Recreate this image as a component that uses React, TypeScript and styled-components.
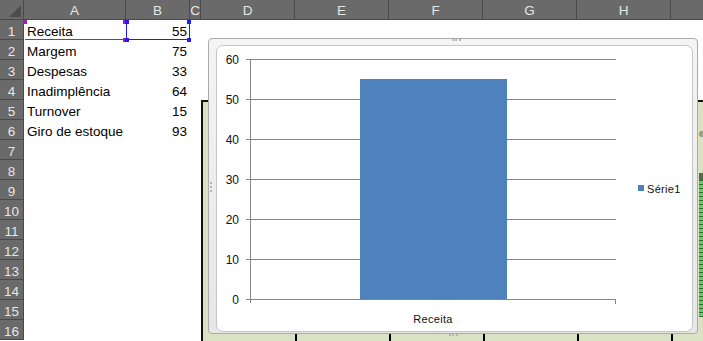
import React from "react";
import styled, { createGlobalStyle } from "styled-components";

const Global = createGlobalStyle`
  html, body { margin: 0; padding: 0; background: #ffffff; overflow: hidden; }
  body { font-family: "Liberation Sans", Arial, sans-serif; }
`;

const Page = styled.div`
  position: relative;
  width: 703px;
  height: 341px;
  overflow: hidden;
  background: #ffffff;
`;

const Sheet = styled.div`
  display: grid;
  grid-template-columns: 24px 102px 64px 11px 94px 94px 94px 94px 94px 1fr;
  grid-auto-rows: 20px;
  font-size: 13.5px;
`;

const HeaderCell = styled.div<{ $last?: boolean }>`
  box-sizing: border-box;
  background: #6a6a6a;
  color: #e6e6e6;
  border-right: ${(p) => (p.$last ? "none" : "1px solid #494949")};
  border-bottom: 1px solid #494949;
  text-align: center;
  padding-top: 1px;
  line-height: 19px;
`;

const Corner = styled(HeaderCell)`
  position: relative;
  svg { position: absolute; left: 0; top: 0; }
`;

const RowHead = styled.div`
  box-sizing: border-box;
  background: #6a6a6a;
  color: #e6e6e6;
  border-right: 1px solid #494949;
  border-bottom: 1px solid #494949;
  text-align: center;
  padding-top: 3px;
  line-height: 17px;
`;

const Cell = styled.div<{ $align?: "left" | "right" }>`
  position: relative;
  box-sizing: border-box;
  color: #000000;
  text-align: ${(p) => p.$align ?? "left"};
  padding: 3px ${(p) => (p.$align === "right" ? "3px" : "0")} 0 ${(p) => (p.$align === "right" ? "0" : "3px")};
  line-height: 17px;
  white-space: nowrap;
`;

const SelLine = styled.div<{ $color: string; $side: "left" | "right" | "bottom" }>`
  position: absolute;
  background: ${(p) => p.$color};
  ${(p) =>
    p.$side === "bottom"
      ? "left: 1px; right: 1px; bottom: 0; height: 1px;"
      : `${p.$side}: 0; top: 1px; bottom: 0; width: 1px;`}
`;

const Handle = styled.div<{ $color: string; $x: "l" | "r"; $y: "t" | "b" }>`
  position: absolute;
  width: 4px;
  height: 4px;
  background: ${(p) => p.$color};
  ${(p) => (p.$x === "l" ? "left: -1px;" : "right: -1px;")}
  ${(p) => (p.$y === "t" ? "top: 0;" : "bottom: -2px;")}
`;

/* chart behind the active one */
const BackChart = styled.div`
  position: absolute;
  left: 201px;
  top: 100px;
  width: 510px;
  height: 250px;
  box-sizing: border-box;
  border-top: 2px solid #111;
  border-left: 2px solid #111;
  background: #dbe2c3;
`;

const Tick = styled.div<{ $x: number }>`
  position: absolute;
  bottom: 9px;
  width: 2px;
  height: 8px;
  background: #000;
  left: ${(p) => p.$x}px;
`;

const GreenBar = styled.div`
  position: absolute;
  left: 496px;
  top: 71px;
  width: 8px;
  height: 137px;
  background: repeating-linear-gradient(to bottom, #2f6a2f 0 1px, #5fcf5f 1px 4px);
  border-top: 7px solid #4f6a4f;
`;

const Marker = styled.div`
  position: absolute;
  left: 496px;
  top: 29px;
  width: 4px;
  height: 6px;
  border-radius: 50%;
  border-left: 2px solid #d88a2a;
  background: #6fb5c8;
`;

const Frame = styled.div`
  position: absolute;
  left: 208px;
  top: 38px;
  width: 490px;
  height: 296px;
  box-sizing: border-box;
  border: 1px solid #ababab;
  border-radius: 4px;
  background: linear-gradient(#f4f4f4, #e6e6e6);
  padding: 6px 4px 1px 7px;
  display: flex;
`;

const Grip = styled.div<{ $pos: "top" | "left" | "bottom" }>`
  position: absolute;
  ${(p) =>
    p.$pos === "top"
      ? "top: 0px; left: 243px; width: 9px; height: 2px; border-top: 2px dotted #b5b5b5;"
      : p.$pos === "bottom"
      ? "bottom: -5px; left: 240px; width: 9px; height: 2px; border-top: 2px dotted #b5b5b5;"
      : "left: 1px; top: 143px; width: 2px; height: 10px; border-left: 2px dotted #b5b5b5;"}
`;

const Plot = styled.div`
  flex: 1;
  box-sizing: border-box;
  background: #ffffff;
  border: 1px solid #c6c6c6;
  border-radius: 7px;
  overflow: hidden;
  svg { display: block; }
`;

const rows: [string, number][] = [
  ["Receita", 55],
  ["Margem", 75],
  ["Despesas", 33],
  ["Inadimplência", 64],
  ["Turnover", 15],
  ["Giro de estoque", 93],
];

const cols = ["A", "B", "C", "D", "E", "F", "G", "H", ""];

const PURPLE = "#9b1fc0";
const BLUE = "#1c1cff";

function Chart() {
  const W = 477;
  const H = 287;
  const x0 = 33;
  const x1 = 399;
  const yTop = 13;
  const yBot = 253;
  const ticks = [60, 50, 40, 30, 20, 10, 0];
  const yOf = (v: number) => yBot - ((yBot - yTop) * v) / 60;
  const font = "'Liberation Sans', Arial, sans-serif";
  return (
    <svg width={W} height={H} viewBox={`0 0 ${W} ${H}`}>
      {ticks.map((t) => (
        <g key={t}>
          <line x1={x0 - 4} x2={x1} y1={yOf(t) + 0.5} y2={yOf(t) + 0.5} stroke="#868686" strokeWidth={1} />
          <text x={22} y={yOf(t) + 4.5} fontSize={12} textAnchor="end" fill="#111" fontFamily={font}>
            {t}
          </text>
        </g>
      ))}
      <line x1={x0 + 0.5} x2={x0 + 0.5} y1={yTop} y2={yBot + 4} stroke="#868686" />
      <line x1={x1 - 0.5} x2={x1 - 0.5} y1={yBot} y2={yBot + 5} stroke="#868686" />
      <rect x={143} y={yOf(55)} width={147} height={yBot - yOf(55)} fill="#4f81bd" />
      <text x={216} y={277} fontSize={11} textAnchor="middle" fill="#111" fontFamily={font} letterSpacing={0.3}>
        Receita
      </text>
      <rect x={421} y={139} width={6} height={6} fill="#4f81bd" />
      <text x={430} y={147} fontSize={11} fill="#111" fontFamily={font} letterSpacing={0.3}>
        Série1
      </text>
    </svg>
  );
}

export default function App() {
  return (
    <Page>
      <Global />
      <Sheet>
        <Corner>
          <svg width="24" height="20" viewBox="0 0 24 20">
            <polygon points="21,5 21,17 9,17" fill="#4d4d4d" />
          </svg>
        </Corner>
        {cols.map((c, i) => (
          <HeaderCell key={i} $last={i === cols.length - 1}>
            {c}
          </HeaderCell>
        ))}
        {Array.from({ length: 16 }).map((_, r) => {
          const data = rows[r];
          return (
            <React.Fragment key={r}>
              <RowHead>{r + 1}</RowHead>
              <Cell>
                {data ? data[0] : ""}
                {r === 0 && (
                  <>
                    <SelLine $color={PURPLE} $side="bottom" />
                    <Handle $color={PURPLE} $x="l" $y="t" />
                    <Handle $color={PURPLE} $x="r" $y="t" />
                    <Handle $color={PURPLE} $x="r" $y="b" />
                  </>
                )}
              </Cell>
              <Cell $align="right">
                {data ? data[1] : ""}
                {r === 0 && (
                  <>
                    <SelLine $color={BLUE} $side="left" />
                    <SelLine $color={BLUE} $side="right" />
                    <SelLine $color={BLUE} $side="bottom" />
                    <Handle $color={BLUE} $x="l" $y="t" />
                    <Handle $color={BLUE} $x="r" $y="t" />
                    <Handle $color={BLUE} $x="l" $y="b" />
                    <Handle $color={BLUE} $x="r" $y="b" />
                  </>
                )}
              </Cell>
              {Array.from({ length: 7 }).map((__, k) => (
                <Cell key={k} />
              ))}
            </React.Fragment>
          );
        })}
      </Sheet>
      <BackChart>
        {[92, 186, 280, 374, 468].map((x) => (
          <Tick key={x} $x={x} />
        ))}
        <Marker />
        <GreenBar />
      </BackChart>
      <Frame>
        <Grip $pos="top" />
        <Grip $pos="left" />
        <Grip $pos="bottom" />
        <Plot>
          <Chart />
        </Plot>
      </Frame>
    </Page>
  );
}
